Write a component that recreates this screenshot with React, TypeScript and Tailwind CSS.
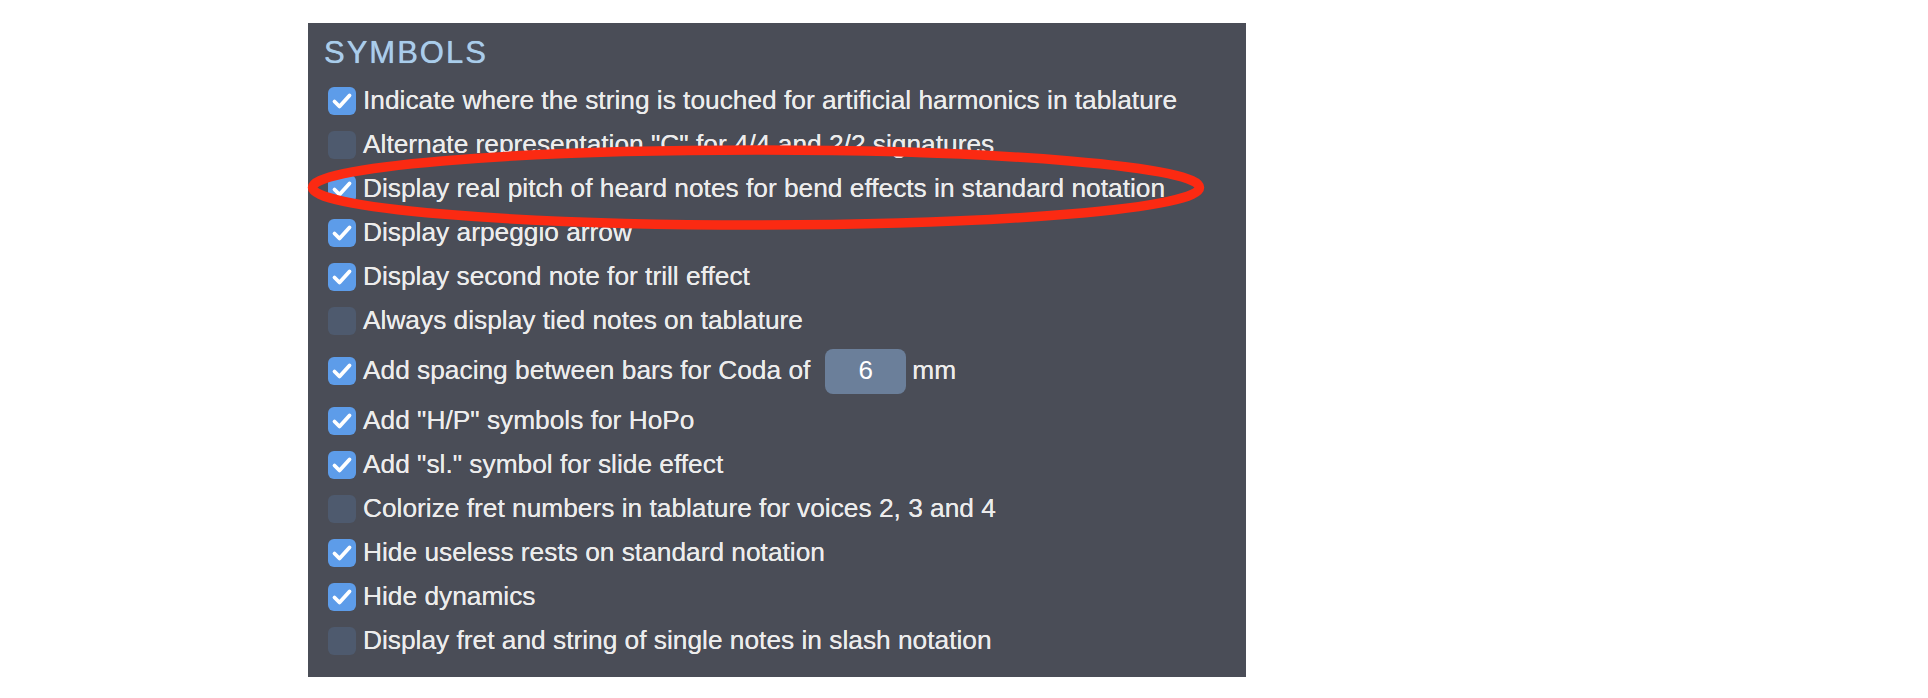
import React from "react";

type Row = { label: string; checked: boolean; coda?: boolean };

const rows: Row[] = [
  { label: "Indicate where the string is touched for artificial harmonics in tablature", checked: true },
  { label: 'Alternate representation "C" for 4/4 and 2/2 signatures', checked: false },
  { label: "Display real pitch of heard notes for bend effects in standard notation", checked: true },
  { label: "Display arpeggio arrow", checked: true },
  { label: "Display second note for trill effect", checked: true },
  { label: "Always display tied notes on tablature", checked: false },
  { label: "Add spacing between bars for Coda of", checked: true, coda: true },
  { label: 'Add "H/P" symbols for HoPo', checked: true },
  { label: 'Add "sl." symbol for slide effect', checked: true },
  { label: "Colorize fret numbers in tablature for voices 2, 3 and 4", checked: false },
  { label: "Hide useless rests on standard notation", checked: true },
  { label: "Hide dynamics", checked: true },
  { label: "Display fret and string of single notes in slash notation", checked: false },
];

function Box({ checked }: { checked: boolean }) {
  if (!checked) {
    return <div className="w-[28px] h-[28px] shrink-0 rounded-[6px] bg-[#4e5a6e]" />;
  }
  return (
    <div className="w-[28px] h-[28px] shrink-0 rounded-[6px] bg-[#5d9ce9] flex items-center justify-center">
      <svg width="28" height="28" viewBox="0 0 28 28">
        <polyline
          points="6.5,14.5 11.5,19.5 21.5,8.5"
          fill="none"
          stroke="#ffffff"
          strokeWidth="3.8"
          strokeLinecap="round"
          strokeLinejoin="round"
        />
      </svg>
    </div>
  );
}

export default function App() {
  return (
    <div
      className="min-h-[698px] w-full bg-white pl-[308px] pt-[23px]"
      style={{ fontFamily: '"Liberation Sans", Arial, sans-serif' }}
    >
      <div className="relative w-[938px] h-[654px] bg-[#4a4d57] pl-[20px]">
        <div className="h-[56px] pt-[4px] leading-[52px] text-[31px] tracking-[2px] text-[#a9cdeb] -ml-[4px] [text-shadow:0_0_0.7px_#a9cdeb]">
          SYMBOLS
        </div>
        <div className="flex flex-col">
          {rows.map((r, i) => (
            <div
              key={i}
              className={`flex items-center gap-[7px] ${r.coda ? "h-[56px]" : "h-[44px]"}`}
            >
              <Box checked={r.checked} />
              <span className="text-[26.3px] leading-[30px] text-[#ececec] whitespace-nowrap pb-[2px] [text-shadow:0_0_0.5px_#ececec]">
                {r.label}
              </span>
              {r.coda && (
                <>
                  <div className="ml-[8px] w-[81px] h-[45px] rounded-[8px] bg-[#6b7f9a] flex items-center justify-center text-[26px] text-white pb-[1px]">
                    6
                  </div>
                  <span className="ml-[-1px] text-[26.3px] leading-[30px] text-[#ececec] pb-[2px] [text-shadow:0_0_0.5px_#ececec]">mm</span>
                </>
              )}
            </div>
          ))}
        </div>
        <svg
          className="absolute left-0 top-0 pointer-events-none overflow-visible"
          width="938"
          height="654"
          viewBox="0 0 938 654"
        >
          <ellipse
            cx="448"
            cy="164.5"
            rx="443.5"
            ry="37.5"
            fill="none"
            stroke="#fb2a12"
            strokeWidth="9.5"
          />
        </svg>
      </div>
    </div>
  );
}
